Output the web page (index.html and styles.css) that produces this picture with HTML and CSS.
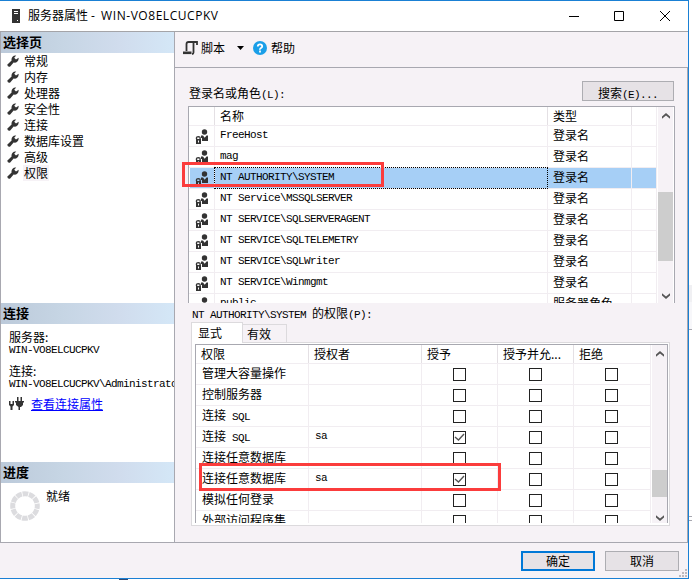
FILE: index.html
```html
<!DOCTYPE html>
<html lang="zh-CN">
<head>
<meta charset="utf-8">
<title>服务器属性</title>
<link rel="stylesheet" href="styles.css">
</head>
<body>
<svg width="0" height="0" class="defs">
  <symbol id="wrench" viewBox="0 0 12 12"><path d="M0.2 9.800 4.600 5.600C4 2.600 6 .2 9.200.6L7.200 2.800 9 4.600 11.600 2.800C12 6 9.400 8.200 6.600 7.600L3.200 11.500Q1 12.600.2 9.800Z"/></symbol>
  <symbol id="user" viewBox="0 0 14 15"><circle cx="9.5" cy="3" r="2.7"/><path d="M6 6.500h2l1.700 2.200L11.500 6.500H13V12H7V9H6Z"/><path fill-rule="evenodd" d="M.8 10V8.800Q.8 7 3.300 7T5.800 8.800V10H6v5H1V10ZM2.200 10H4.400V8.400H2.200ZM3 11.500v2h1v-2Z"/></symbol>
  <symbol id="up" viewBox="0 0 8 6"><path d="M0 5.800V3.600L4 0l4 3.600v2.200L4 2.600Z"/></symbol>
  <symbol id="down" viewBox="0 0 8 6"><path d="M0 .2v2.200L4 6l4-3.600V.2L4 3.400Z"/></symbol>
</svg>
<div class="window">
  <div class="titlebar">
    <svg class="server" width="8" height="14" viewBox="0 0 8 14"><path fill="#333" d="M0 0h8v14H0z"/><path stroke="#fff" d="M2 2.500h4M2 4.500h4"/><path fill="#fff" d="M5 11h1v1H5z"/></svg>
    <span class="caption">服务器属性 - <span class="host">WIN-VO8ELCUCPKV</span></span>
    <svg class="controls" width="101" height="12" viewBox="0 0 101 12" fill="none" stroke="#000"><path d="M0 6.500h10M45.500 1.500h9v9h-9zM91 1l10 10M101 1L91 11"/></svg>
  </div>
  <div class="main">
    <div class="side">
      <h2>选择页</h2>
      <ul class="nav">
        <li><svg><use href="#wrench"/></svg><span>常规</span></li>
        <li><svg><use href="#wrench"/></svg><span>内存</span></li>
        <li><svg><use href="#wrench"/></svg><span>处理器</span></li>
        <li><svg><use href="#wrench"/></svg><span>安全性</span></li>
        <li><svg><use href="#wrench"/></svg><span>连接</span></li>
        <li><svg><use href="#wrench"/></svg><span>数据库设置</span></li>
        <li><svg><use href="#wrench"/></svg><span>高级</span></li>
        <li class="current"><svg><use href="#wrench"/></svg><span>权限</span></li>
      </ul>
      <h2>连接</h2>
      <div class="conn">
        <p>服务器:</p><p class="m">WIN-VO8ELCUCPKV</p>
        <p class="second">连接:</p><p class="m">WIN-VO8ELCUCPKV\Administrator</p>
        <div class="link"><svg width="15" height="14" viewBox="0 0 15 14" fill="#333"><path d="M0 4h1.500v3h2V4H5v4L3.500 9.500V13H1.500V9.500L0 8ZM8 0h1.500v4H8zM11.500 0H13v4h-1.500zM6 4h9v1.500h-1V8l-2 2H11v3H9.500v-3L7 8V5.500H6Z"/></svg><a>查看连接属性</a></div>
      </div>
      <h2>进度</h2>
      <div class="progress"><svg width="30" height="30" viewBox="0 0 30 30"><circle cx="15" cy="15" r="12.300" fill="none" stroke="#dcdcdf" stroke-width="5" stroke-dasharray="5.640 .8" stroke-dashoffset="2.800"/></svg><span>就绪</span></div>
    </div>
    <div class="content">
      <div class="toolbar">
        <svg width="15" height="14" viewBox="0 0 15 14" fill="none" stroke="#333"><path d="M3.500 10V3Q3.500 1 5.500 1H14v3M10.500 2v9.500Q10.500 13 9 13" stroke-width="1.800"/><path d="M0 11.800h8.500" stroke-width="2.600"/></svg>
        <span class="script">脚本</span>
        <svg class="caret" width="7" height="4" viewBox="0 0 7 4"><path d="M0 0h7L3.500 4z"/></svg>
        <svg class="help" width="14" height="14" viewBox="0 0 14 14"><circle cx="7" cy="7" r="7" fill="#1a9fe8"/><path d="M4.800 5.500Q4.800 3.300 7 3.300T9.200 5.300Q9.200 6.300 8 7T7 8.700" fill="none" stroke="#fff" stroke-width="1.800"/><path fill="#fff" d="M6.100 9.600h1.800v1.800H6.100z"/></svg>
        <span>帮助</span>
      </div>
      <div class="page">
        <div class="search-row"><span>登录名或角色<span class="m">(L):</span></span><button class="btn search">搜索<span class="m">(E)...</span></button></div>
        <div class="grid logins">
          <div class="rows">
            <div class="row head"><i></i><b>名称</b><b>类型</b><b></b></div>
            <div class="row"><i><svg><use href="#user"/></svg></i><b class="m">FreeHost</b><b>登录名</b><b></b></div>
            <div class="row"><i><svg><use href="#user"/></svg></i><b class="m">mag</b><b>登录名</b><b></b></div>
            <div class="row selected"><i><svg><use href="#user"/></svg></i><b class="m">NT AUTHORITY\SYSTEM</b><b>登录名</b><b></b></div>
            <div class="row"><i><svg><use href="#user"/></svg></i><b class="m">NT Service\MSSQLSERVER</b><b>登录名</b><b></b></div>
            <div class="row"><i><svg><use href="#user"/></svg></i><b class="m">NT SERVICE\SQLSERVERAGENT</b><b>登录名</b><b></b></div>
            <div class="row"><i><svg><use href="#user"/></svg></i><b class="m">NT SERVICE\SQLTELEMETRY</b><b>登录名</b><b></b></div>
            <div class="row"><i><svg><use href="#user"/></svg></i><b class="m">NT SERVICE\SQLWriter</b><b>登录名</b><b></b></div>
            <div class="row"><i><svg><use href="#user"/></svg></i><b class="m">NT SERVICE\Winmgmt</b><b>登录名</b><b></b></div>
            <div class="row"><i><svg><use href="#user"/></svg></i><b class="m">public</b><b>服务器角色</b><b></b></div>
          </div>
          <div class="scroll"><svg><use href="#up"/></svg><div class="thumb"></div><svg><use href="#down"/></svg></div>
        </div>
        <div class="perm-label"><span class="m">NT AUTHORITY\SYSTEM </span>的权限<span class="m">(P):</span></div>
        <div class="tabs"><div class="tab active">显式</div><div class="tab">有效</div></div>
        <div class="tabpage">
          <div class="grid perms">
            <div class="rows">
              <div class="row head"><b>权限</b><b>授权者</b><b>授予</b><b>授予并允...</b><b>拒绝</b></div>
              <div class="row"><b>管理大容量操作</b><b></b><i><u></u></i><i><u></u></i><i><u></u></i></div>
              <div class="row"><b>控制服务器</b><b></b><i><u></u></i><i><u></u></i><i><u></u></i></div>
              <div class="row"><b>连接<span class="m"> SQL</span></b><b></b><i><u></u></i><i><u></u></i><i><u></u></i></div>
              <div class="row"><b>连接<span class="m"> SQL</span></b><b class="m">sa</b><i><u><svg viewBox="0 0 11 11"><path d="M1 5l3.500 3 5.500-6"/></svg></u></i><i><u></u></i><i><u></u></i></div>
              <div class="row"><b>连接任意数据库</b><b></b><i><u></u></i><i><u></u></i><i><u></u></i></div>
              <div class="row"><b>连接任意数据库</b><b class="m">sa</b><i><u><svg viewBox="0 0 11 11"><path d="M1 5l3.500 3 5.500-6"/></svg></u></i><i><u></u></i><i><u></u></i></div>
              <div class="row"><b>模拟任何登录</b><b></b><i><u></u></i><i><u></u></i><i><u></u></i></div>
              <div class="row"><b>外部访问程序集</b><b></b><i><u></u></i><i><u></u></i><i><u></u></i></div>
            </div>
            <div class="scroll"><svg><use href="#up"/></svg><div class="thumb"></div><svg><use href="#down"/></svg></div>
          </div>
        </div>
      </div>
    </div>
  </div>
  <div class="footer"><button class="btn ok">确定</button><button class="btn">取消</button></div>
  <svg class="grip" width="8" height="8" viewBox="0 0 8 8" fill="#bdb9bd"><path d="M6 0h2v2H6zM3 3h2v2H3zM6 3h2v2H6zM0 6h2v2H0zM3 6h2v2H3zM6 6h2v2H6z"/></svg>
</div>
<div class="mark mark-login"></div>
<div class="mark mark-perm"></div>
<div class="behind"></div>
<div class="behind line"></div>
<div class="behind low"></div>
<div class="fleck"></div>
</body>
</html>
```
FILE: styles.css
```css
* { box-sizing: border-box; }
body { margin: 0; width: 692px; height: 580px; overflow: hidden; position: relative; background: #fff; color: #000; font: 12px/16px "Noto Sans CJK SC", sans-serif; }
.defs { position: absolute; }
h2, p, ul { margin: 0; padding: 0; }
b, i, u { font-weight: normal; font-style: normal; text-decoration: none; }
svg { display: block; flex: none; }
.m { font-family: "Liberation Mono", monospace; font-size: 11px; letter-spacing: -0.6px; white-space: pre; }
.window { position: relative; width: 689px; height: 579px; border: solid #1a80d4; border-width: 1px 1px 1px 0; background: #f6f2f6; display: flex; flex-direction: column; }
.titlebar { height: 31px; flex: none; background: #fff; border-bottom: 1px solid #a4a4a8; display: flex; align-items: center; padding-left: 12px; }
.caption { margin-left: 8px; flex: 1; white-space: pre; font-family: "Open Sans", "Noto Sans CJK SC", sans-serif; }
.host { letter-spacing: 0.55px; margin-left: 3px; }
.controls { margin-right: 18px; }
.main { height: 511px; flex: none; display: flex; border-bottom: 1px solid #a8a8b0; }
.side { width: 175px; flex: none; background: #fff; border: solid #a8a8b0; border-width: 0 1px; overflow: hidden; display: flex; flex-direction: column; }
h2 { height: 21px; flex: none; padding-left: 2px; font-size: 13px; line-height: 19px; font-weight: bold; background: linear-gradient(90deg, #bccada, #c6d5e4 35%, #d0dced 68%, #d4e7f7); }
.nav { height: 250px; list-style: none; }
.nav li { height: 16px; display: flex; align-items: center; padding-left: 6px; }
.nav svg { width: 12px; height: 12px; fill: #333; margin-top: -1px; }
.nav span { margin-left: 4px; padding: 0 1px 0 1px; }
.nav .current span { background: #f6f2f6; }
.conn { height: 138px; padding: 5px 0 0 8px; white-space: nowrap; }
.conn p { height: 15px; line-height: 15px; }
.conn p.m { height: 12px; line-height: 12px; }
.conn p.second { margin-top: 7px; }
.link { display: flex; align-items: center; margin-top: 6px; }
.link a { color: #00f; text-decoration: underline; margin-left: 7px; }
.progress { display: flex; padding: 8px 0 0 9px; }
.progress span { margin: -3px 0 0 6px; }
.content { flex: 1; min-width: 0; }
.toolbar { height: 36px; border-bottom: 1px solid #a8a8b0; display: flex; align-items: center; padding: 0 0 3px 8px; }
.script { margin-left: 3px; }
.caret { margin-left: 12px; }
.help { margin: 0 4px 0 9px; }
.page { height: 474px; border-right: 1px solid #a8a8b0; padding: 13px 0 0 13px; }
.search-row { height: 20px; display: flex; justify-content: space-between; padding: 0 13px 0 1px; }
.search-row > span { padding-top: 4px; }
.btn { width: 74px; height: 20px; padding: 0; border: 1px solid #adadb2; background: #e6e2e6; font: inherit; line-height: 18px; }
.btn.search { width: 92px; padding-top: 2px; }
.grid { display: flex; background: #fff; overflow: hidden; }
.logins { width: 487px; height: 197px; margin-top: 5px; border: solid #a8a8b0; border-width: 1px 1px 0; }
.rows { border-right: 1px solid #f1edf1; flex: none; }
.row { display: grid; height: 21px; border-bottom: 1px solid #f1edf1; line-height: 18px; }
.row.head { height: 19px; }
.row > * { border-right: 1px solid #f1edf1; white-space: nowrap; overflow: hidden; }
.row.head > * { border-right-color: #e4e0e4; }
.row > :last-child { border-right: 0; }
.logins .row { grid-template-columns: 26px 333px 84px 24px; }
.logins .row b { padding-left: 5px; }
.row > i > svg { width: 14px; height: 15px; margin: 3px 0 0 6px; fill: #333; }
.selected { background: linear-gradient(#a6cff6, #a6cff6) 1px 0 no-repeat; }
.selected b.m { outline: 1px dotted #000; margin-right: 1px; border-right: 0; }
.scroll { margin-left: 1px; width: 15px; display: flex; flex-direction: column; align-items: center; background: #f6f2f6; }
.scroll svg { width: 8px; height: 6px; fill: #555; }
.thumb { width: 15px; background: #cdcdcd; }
.logins .scroll { padding-top: 6px; }
.logins .thumb { height: 69px; margin: 73px 0 32px; }
.perm-label { height: 19px; padding: 2px 0 0 4px; }
.tabs { display: flex; align-items: flex-end; margin-left: 3px; height: 20px; }
.tab { width: 44px; height: 18px; border: 1px solid #dcdadd; border-width: 1px 1px 0 0; padding-left: 4px; line-height: 18px; }
.tab.active { width: 52px; height: 21px; margin-bottom: -1px; background: #fff; border-left-width: 1px; padding-left: 6px; z-index: 1; line-height: 19px; }
.tabpage { width: 479px; height: 184px; margin-left: 3px; border: 1px solid #dcdadd; background: #fff; padding: 1px 1px 0 3px; }
.perms { width: 473px; height: 179px; border: solid #a8a8b0; border-width: 1px 1px 0; }
.perms .row { grid-template-columns: 113px 113px 76px 76px 76px; }
.perms .row b { padding-left: 6px; }
.perms .row.head b { padding-left: 5px; }
.perms .rows { width: 455px; }
.perms .scroll { padding-top: 6px; }
.perms .thumb { height: 27px; margin: 113px 0 18px; }
u { display: block; width: 13px; height: 13px; border: 1px solid #222; background: #fff; margin: 4px 0 0 31px; }
u svg { width: 11px; height: 11px; fill: none; stroke: #555; stroke-width: 1.4; }
.footer { display: flex; gap: 10px; justify-content: flex-end; padding: 8px 9px 0 0; }
.btn.ok { border: 2px solid #0078d7; line-height: 16px; }
.grip { position: absolute; right: 1px; bottom: 1px; }
.mark { position: absolute; border: 3px solid #fb3c3c; }
.mark-login { left: 182px; top: 162px; width: 202px; height: 25px; }
.mark-perm { left: 199px; top: 463px; width: 302px; height: 28px; }
.behind { position: absolute; left: 689px; top: 285px; width: 3px; height: 17px; background: #f0f0f3; }
.behind.line { top: 302px; height: 28px; background: #f7f7fa; border-bottom: 1px solid #a8a8b0; }
.behind.low { top: 516px; height: 5px; background: #fff; border: solid #a8a8b0; border-width: 1px 0; }
.fleck { position: absolute; left: 119px; top: 579px; width: 9px; height: 1px; background: #354a70; }
```
